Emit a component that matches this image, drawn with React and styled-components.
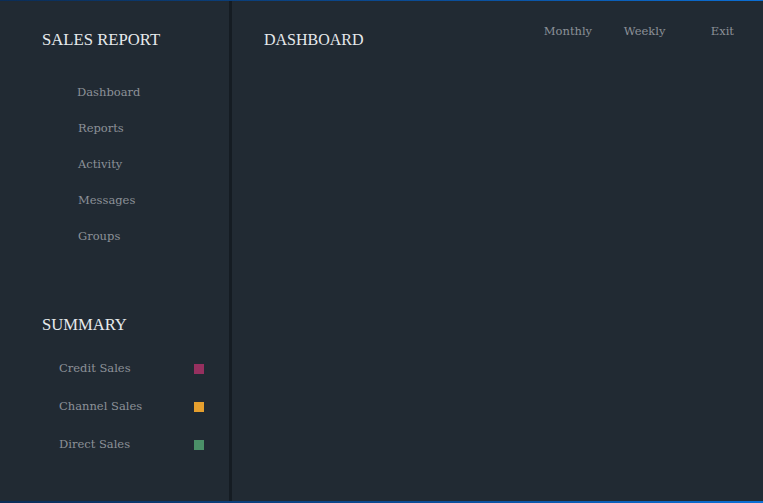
import React from 'react';
import styled, { createGlobalStyle } from 'styled-components';

const Global = createGlobalStyle`
    html, body {
        margin: 0;
        padding: 0;
        background: #212a33;
    }
    body {
        font-family: 'DejaVu Serif', 'Liberation Serif', serif;
    }
`;

const Frame = styled.div`
    width: 763px;
    height: 503px;
    box-sizing: border-box;
    display: flex;
    background: #212a33;
    border-top: 1px solid transparent;
    border-bottom: 2px solid transparent;
    border-image: linear-gradient(90deg, #0b2d57, #0a4f9c 60%, #0b6fd6) 1;
    border-left: 0;
    border-right: 0;
`;

const Sidebar = styled.aside`
    width: 229px;
    flex-shrink: 0;
    border-right: 3px solid #151c23;
    box-sizing: content-box;
    display: flex;
    flex-direction: column;
`;

const Title = styled.h2`
    margin: 0;
    font-family: 'Liberation Serif', serif;
    font-weight: normal;
    font-size: ${(p) => p.$size || '16px'};
    line-height: 20px;
    color: #e6e9ec;
`;

const Brand = styled(Title)`
    padding: 29px 0 0 42px;
`;

const Nav = styled.ul`
    list-style: none;
    margin: 0;
    padding: 34px 0 0 77px;
    display: flex;
    flex-direction: column;
    gap: 19px;
`;

const NavItem = styled.li`
    font-size: 11.5px;
    line-height: 17px;
    color: #8c9198;
    padding-left: ${(p) => (p.$shift ? '1px' : '0')};
`;

const Summary = styled.section`
    margin-top: 70px;
    padding-left: 42px;
`;

const Legend = styled.ul`
    list-style: none;
    margin: 0;
    padding: 25px 25px 0 59px;
    display: flex;
    flex-direction: column;
    gap: 21px;
`;

const LegendRow = styled.li`
    display: flex;
    align-items: center;
    justify-content: space-between;
    font-size: 11.5px;
    line-height: 17px;
    color: #8c9198;
`;

const Swatch = styled.span`
    width: 10px;
    height: 10px;
    background: ${(p) => p.$color};
`;

const Main = styled.main`
    flex: 1;
    display: flex;
    justify-content: space-between;
    align-items: flex-start;
    padding: 29px 29px 0 32px;
`;

const Tabs = styled.nav`
    display: flex;
    gap: 29px;
    margin-top: -7px;
`;

const Tab = styled.a`
    font-size: 11.5px;
    line-height: 17px;
    color: #8c9198;
    text-decoration: none;
    min-width: ${(p) => (p.$w ? p.$w : 'auto')};
`;

const navItems = ['Dashboard', 'Reports', 'Activity', 'Messages', 'Groups'];

const legend = [
    { label: 'Credit Sales', color: '#96305f' },
    { label: 'Channel Sales', color: '#e59f2e' },
    { label: 'Direct Sales', color: '#4b9068' },
];

const App = () => {
    return (
        <>
            <Global />
            <Frame>
                <Sidebar>
                    <Brand $size='16.7px'>SALES REPORT</Brand>
                    <Nav>
                        {navItems.map((item, i) => (
                            <NavItem key={item} $shift={i > 0}>
                                {item}
                            </NavItem>
                        ))}
                    </Nav>
                    <Summary>
                        <Title $size='16.6px'>SUMMARY</Title>
                    </Summary>
                    <Legend>
                        {legend.map((l) => (
                            <LegendRow key={l.label}>
                                {l.label}
                                <Swatch $color={l.color} />
                            </LegendRow>
                        ))}
                    </Legend>
                </Sidebar>
                <Main>
                    <Title>DASHBOARD</Title>
                    <Tabs>
                        <Tab href='#' $w='51px'>Monthly</Tab>
                        <Tab href='#' $w='58px'>Weekly</Tab>
                        <Tab href='#'>Exit</Tab>
                    </Tabs>
                </Main>
            </Frame>
        </>
    );
};

export default App;
